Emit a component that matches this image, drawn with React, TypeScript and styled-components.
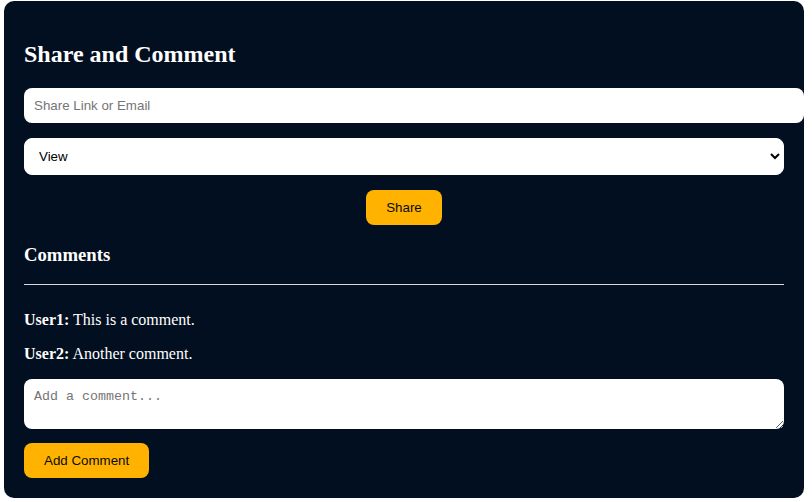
import * as React from "react";
import styled, { createGlobalStyle } from "styled-components";

const GlobalStyle = createGlobalStyle`
  body {
    margin: 0;
    background: #ffffff;
    font-family: "Liberation Serif", "Times New Roman", serif;
  }
`;

const Panel = styled.section`
  box-sizing: border-box;
  width: 800px;
  margin: 1px 0 0 4px;
  padding: 20px;
  background: #020f20;
  color: #ffffff;
  border-radius: 10px;
`;

const Title = styled.h2`
  margin: 20px 0;
  font-size: 24px;
  font-weight: bold;
`;

// content-box on purpose: the field runs past the right padding like the original
const LinkInput = styled.input`
  display: block;
  box-sizing: content-box;
  width: 100%;
  height: 15px;
  margin: 0 0 15px;
  padding: 10px;
  border: none;
  border-radius: 8px;
  font-family: "Liberation Sans", Arial, sans-serif;
  font-size: 13.33px;
  color: #000;
  background: #fff;
  outline: none;

  &::placeholder {
    color: #757575;
  }
`;

const RoleSelect = styled.select`
  display: block;
  box-sizing: border-box;
  width: 100%;
  height: 37px;
  margin: 0 0 15px;
  padding: 0 10px;
  border: 1px solid #fff;
  border-radius: 8px;
  background: #fff;
  color: #000;
  font-family: "Liberation Sans", Arial, sans-serif;
  font-size: 13.33px;
`;

const Center = styled.div`
  display: flex;
  justify-content: center;
`;

const ActionButton = styled.button`
  height: 35px;
  padding: 0 20px;
  border: none;
  border-radius: 8px;
  background: #ffb300;
  color: #0a0a0a;
  font-family: "Liberation Sans", Arial, sans-serif;
  font-size: 13.33px;
  cursor: pointer;
`;

const SubTitle = styled.h3`
  margin: 19px 0 18px;
  font-size: 18.72px;
  font-weight: bold;
`;

const Rule = styled.hr`
  margin: 0;
  border: none;
  border-top: 1px solid #d9d9d9;
`;

const CommentList = styled.div`
  padding-top: 10px;
`;

const Comment = styled.p`
  margin: 16px 0;
  font-size: 16px;
`;

const CommentBox = styled.textarea`
  display: block;
  box-sizing: border-box;
  width: 100%;
  height: 50px;
  margin: 0 0 14px;
  padding: 10px;
  border: none;
  border-radius: 8px;
  font-family: "Liberation Mono", "Courier New", monospace;
  font-size: 13.33px;
  background: #fff;
  outline: none;

  &::placeholder {
    color: #757575;
  }
`;

const comments = [
  { user: "User1", text: "This is a comment." },
  { user: "User2", text: "Another comment." },
];

const App = () => {
  return (
    <>
      <GlobalStyle />
      <Panel>
        <Title>Share and Comment</Title>
        <LinkInput placeholder="Share Link or Email" />
        <RoleSelect defaultValue="view">
          <option value="view">View</option>
          <option value="edit">Edit</option>
        </RoleSelect>
        <Center>
          <ActionButton>Share</ActionButton>
        </Center>
        <SubTitle>Comments</SubTitle>
        <Rule />
        <CommentList>
          {comments.map((c, i) => (
            <Comment key={i}>
              <strong>{c.user}:</strong> {c.text}
            </Comment>
          ))}
        </CommentList>
        <CommentBox placeholder="Add a comment..." />
        <ActionButton>Add Comment</ActionButton>
      </Panel>
    </>
  );
};

export default App;
